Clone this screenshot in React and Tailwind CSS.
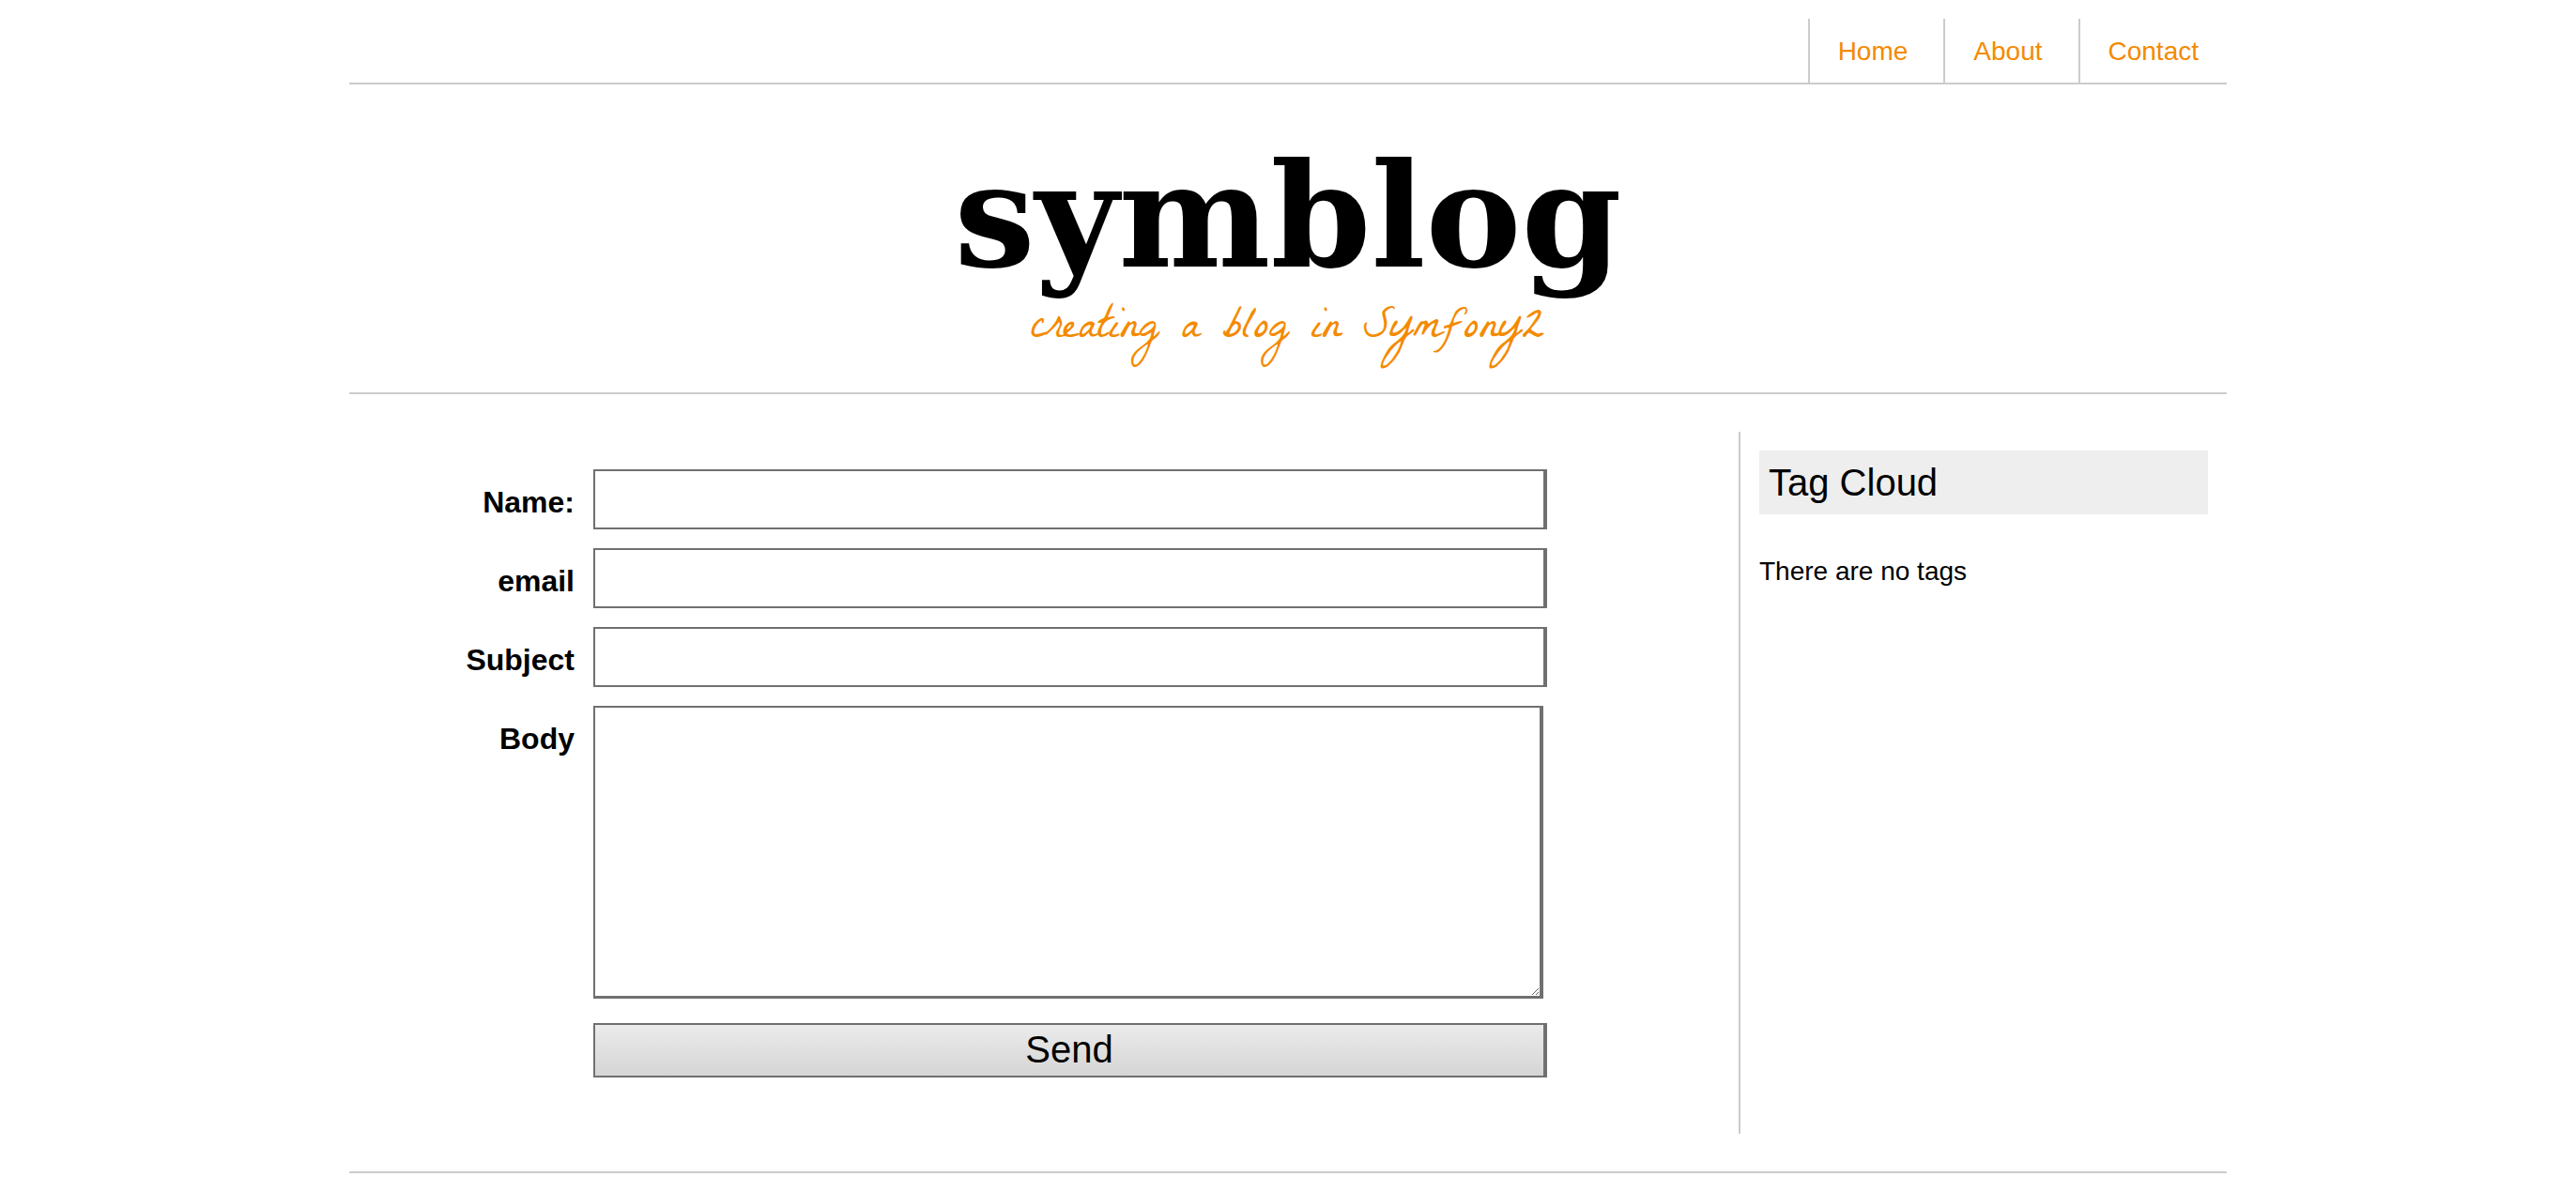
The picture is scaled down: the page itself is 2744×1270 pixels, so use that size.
const NAV = ['Home', 'About', 'Contact'];

const FIELDS = [
  { id: 'name', label: 'Name:', type: 'text' },
  { id: 'email', label: 'email', type: 'email' },
  { id: 'subject', label: 'Subject', type: 'text' },
];

const labelClass =
  'w-60 shrink-0 pt-[17px] text-right text-[32px] leading-9 font-bold';

export default function App() {
  return (
    <div className="min-h-screen bg-white font-['Liberation_Sans',Arial,sans-serif] text-[28px] text-black">
      <div className="mx-auto max-w-[2000px] pt-5 pb-5">
        <nav className="flex justify-end gap-2 border-b-2 border-[#cccccc]">
          {NAV.map((item) => (
            <a
              key={item}
              href="#"
              className="border-l-2 border-[#cccccc] px-[30px] pt-[21px] pb-[19px] leading-7 text-[#f48a00]"
            >
              {item}
            </a>
          ))}
        </nav>

        <header className="border-b-2 border-[#cccccc] pt-12 pb-9 text-center">
          <h1 className="font-['Irish_Grover','IrishGrover','Irish_Growler','DejaVu_Serif',serif] text-[153px] leading-[184px] font-bold">
            <a href="#">symblog</a>
          </h1>
          <h2 className="font-['La_Belle_Aurore','Liberation_Serif',serif] text-[48px] leading-[60px] text-[#f48a00]">
            <a href="#">creating a blog in Symfony2</a>
          </h2>
        </header>

        <div className="flex py-10">
          <main className="min-w-0 flex-1 pt-10 pr-51">
            <form className="flex flex-col gap-5" onSubmit={(e) => e.preventDefault()}>
              {FIELDS.map((field) => (
                <div key={field.id} className="flex gap-5">
                  <label htmlFor={field.id} className={labelClass}>
                    {field.label}
                  </label>
                  <input
                    id={field.id}
                    type={field.type}
                    className="h-16 min-w-0 flex-1 border-2 border-r-4 border-[#707070] bg-white px-2 outline-none"
                  />
                </div>
              ))}
              <div className="flex gap-5">
                <label htmlFor="body" className={labelClass}>
                  Body
                </label>
                <div className="min-w-0 flex-1 pr-1">
                  <textarea
                    id="body"
                    className="block h-78 w-full border-2 border-r-4 border-b-3 border-[#707070] bg-white px-2 outline-none"
                  />
                </div>
              </div>
              <div className="mt-1.5 ml-65 flex">
                <button
                  type="submit"
                  className="h-[58px] flex-1 border-2 border-r-4 border-[#707070] bg-linear-to-b from-[#ebebeb] to-[#d5d5d5] pb-0.5 text-[40px] leading-[52px]"
                >
                  Send
                </button>
              </div>
            </form>
          </main>

          <aside className="min-h-[748px] w-[520px] shrink-0 border-l-2 border-[#cccccc] p-5">
            <h3 className="bg-[#eeeeee] p-2.5 text-[40px] leading-12">Tag Cloud</h3>
            <p className="mt-10 leading-[42px]">There are no tags</p>
          </aside>
        </div>

        <div className="border-t-2 border-[#cccccc]" />
      </div>
    </div>
  );
}
